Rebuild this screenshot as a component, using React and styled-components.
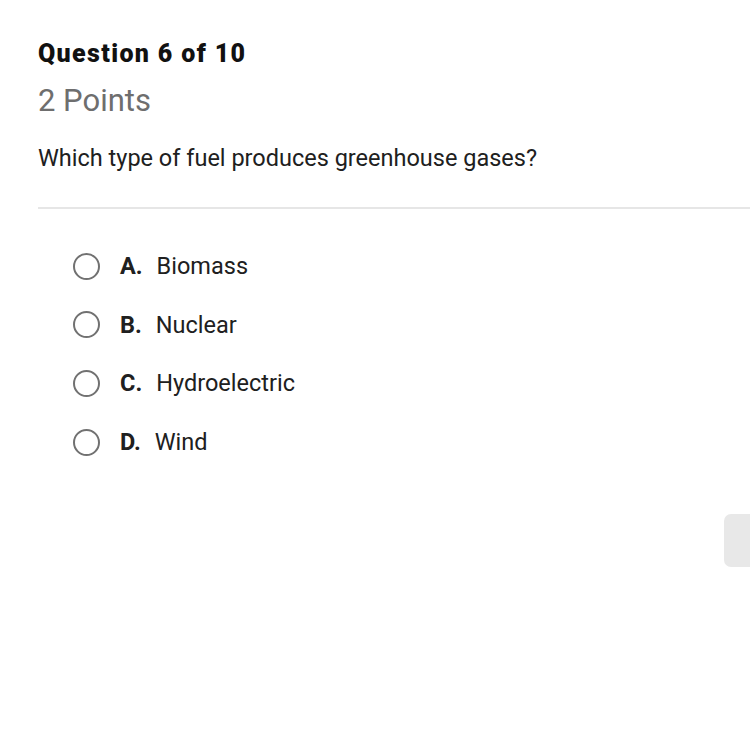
import React from "react";
import styled, { createGlobalStyle } from "styled-components";

const GlobalStyle = createGlobalStyle`
  html, body {
    margin: 0;
    padding: 0;
    background: #ffffff;
  }
  body {
    font-family: Roboto, "Liberation Sans", Arial, sans-serif;
    color: #212121;
  }
`;

const Page = styled.div`
  width: 750px;
  height: 750px;
  overflow: hidden;
  position: relative;
  background: #fff;
`;

const Header = styled.div`
  padding: 38px 0 0 38px;
`;

const Title = styled.div`
  font-size: 25px;
  font-weight: 900;
  letter-spacing: 1.35px;
  color: #111;
  line-height: 32px;
`;

const Points = styled.div`
  font-size: 31px;
  color: #6e6e6e;
  line-height: 36px;
  margin-top: 13px;
`;

const Prompt = styled.div`
  font-size: 23.5px;
  color: #202020;
  line-height: 28px;
  margin-top: 25px;
`;

const Divider = styled.hr`
  border: none;
  border-top: 2px solid #e6e6e6;
  margin: 35px 0 0 38px;
`;

const Options = styled.div`
  display: flex;
  flex-direction: column;
  gap: 30.7px;
  padding: 43px 0 0 73px;
`;

const Option = styled.label`
  display: flex;
  align-items: center;
  height: 28px;
  font-size: 23.5px;
  color: #202020;
`;

const Radio = styled.span`
  width: 23px;
  height: 23px;
  border: 2.5px solid #717171;
  border-radius: 50%;
  box-sizing: content-box;
  flex: none;
  margin-right: 20px;
`;

const Letter = styled.span`
  font-weight: 700;
  flex: none;
  margin-right: 14px;
`;

const SideTab = styled.div`
  position: absolute;
  left: 724px;
  top: 514px;
  width: 40px;
  height: 53px;
  border-radius: 7px;
  background: #e8e8e8;
`;

const choices = [
  { letter: "A.", text: "Biomass" },
  { letter: "B.", text: "Nuclear" },
  { letter: "C.", text: "Hydroelectric" },
  { letter: "D.", text: "Wind" },
];

export default function App() {
  return (
    <Page>
      <GlobalStyle />
      <Header>
        <Title>Question 6 of 10</Title>
        <Points>2 Points</Points>
        <Prompt>Which type of fuel produces greenhouse gases?</Prompt>
      </Header>
      <Divider />
      <Options>
        {choices.map((c) => (
          <Option key={c.letter}>
            <Radio />
            <Letter>{c.letter}</Letter>
            {c.text}
          </Option>
        ))}
      </Options>
      <SideTab />
    </Page>
  );
}
